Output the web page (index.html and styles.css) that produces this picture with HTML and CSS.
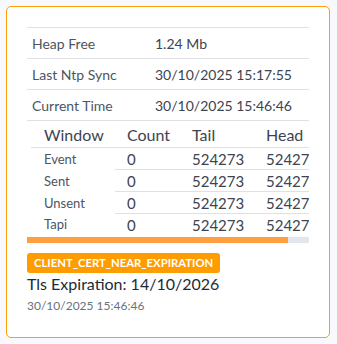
FILE: index.html
```html
<!DOCTYPE html>
<html>
<head>
<meta charset="utf-8">
<link rel="stylesheet" href="styles.css">
</head>
<body>
<div class="page">
  <div class="card">
    <table class="info">
      <tr><td class="lbl">Heap Free</td><td class="val">1.24 Mb</td></tr>
      <tr><td class="lbl">Last Ntp Sync</td><td class="val">30/10/2025 15:17:55</td></tr>
      <tr><td class="lbl">Current Time</td><td class="val">30/10/2025 15:46:46</td></tr>
    </table>
    <div class="scroller">
      <div class="clip">
        <table class="win">
          <colgroup><col class="c1"><col class="c2"><col class="c3"><col class="c4"></colgroup>
          <thead>
            <tr><th>Window</th><th>Count</th><th>Tail</th><th>Head</th></tr>
          </thead>
          <tbody>
            <tr><th>Event</th><td>0</td><td>524273</td><td>524273</td></tr>
            <tr><th>Sent</th><td>0</td><td>524273</td><td>524273</td></tr>
            <tr><th>Unsent</th><td>0</td><td>524273</td><td>524273</td></tr>
            <tr><th>Tapi</th><td>0</td><td>524273</td><td>524273</td></tr>
          </tbody>
        </table>
      </div>
      <div class="track"><div class="thumb"></div></div>
    </div>
    <div class="badge">CLIENT_CERT_NEAR_EXPIRATION</div>
    <div class="tls">Tls Expiration: 14/10/2026</div>
    <div class="stamp">30/10/2025 15:46:46</div>
  </div>
</div>
</body>
</html>
```

FILE: styles.css
```css
html, body {
  margin: 0;
  padding: 0;
  background: #f7f9fd;
  font-family: "Lato", "Noto Sans", sans-serif;
}
.page {
  padding: 6px 7px 6px 6px;
}
.card {
  width: 282px;
  height: 290px;
  background: #fff;
  border: 1px solid #ff9f0a;
  border-radius: 5px;
  padding: 20px;
}
.info {
  width: 282px;
  border-collapse: collapse;
  font-size: 14px;
}
.info td {
  height: 30px;
  padding: 0 5px;
  border-top: 1px solid #dee2e6;
  border-bottom: 1px solid #dee2e6;
  vertical-align: middle;
}
.info .lbl {
  width: 113px;
  color: #4d5562;
}
.info .val {
  color: #3d4350;
}
.scroller {
  padding-left: 4px;
}
.clip {
  width: 278px;
  overflow: hidden;
}
.win {
  border-collapse: collapse;
  table-layout: fixed;
  width: 300px;
  white-space: nowrap;
}
.win col.c1 { width: 84px; }
.win col.c2 { width: 65px; }
.win col.c3 { width: 74px; }
.win col.c4 { width: 77px; }
.win th, .win td {
  text-align: left;
  padding: 0 0 0 12px;
  vertical-align: middle;
  overflow: hidden;
}
.win th:first-child { padding-left: 13px; }
.win thead th {
  height: 25px;
  font-size: 16px;
  line-height: 20px;
  font-weight: normal;
  color: #3d4350;
  border-bottom: 1px solid #dee2e6;
  padding-top: 1px;
}
.win tbody th {
  font-size: 13px;
  line-height: 18px;
  font-weight: normal;
  color: #4d5562;
  height: 21px;
}
.win tbody td {
  font-size: 15px;
  line-height: 18px;
  color: #3d4350;
  height: 21px;
  border-top: 1px solid #dee2e6;
}
.win tbody tr:first-child td { border-top: none; }
.track {
  margin: 2px 0 0 -4px;
  width: 282px;
  height: 6px;
  background: #e3e6ea;
}
.thumb {
  width: 261px;
  height: 6px;
  background: #ffa040;
}
.badge {
  display: inline-block;
  margin-top: 10px;
  background: #ff9c00;
  color: #fff;
  font-weight: bold;
  font-size: 11.3px;
  line-height: 20px;
  padding: 0 7px;
  border-radius: 3px;
}
.tls {
  margin-top: 1px;
  font-size: 16px;
  line-height: 20px;
  color: #222a38;
}
.stamp {
  margin-top: 4px;
  font-size: 12px;
  line-height: 16px;
  color: #6c717a;
}
```
